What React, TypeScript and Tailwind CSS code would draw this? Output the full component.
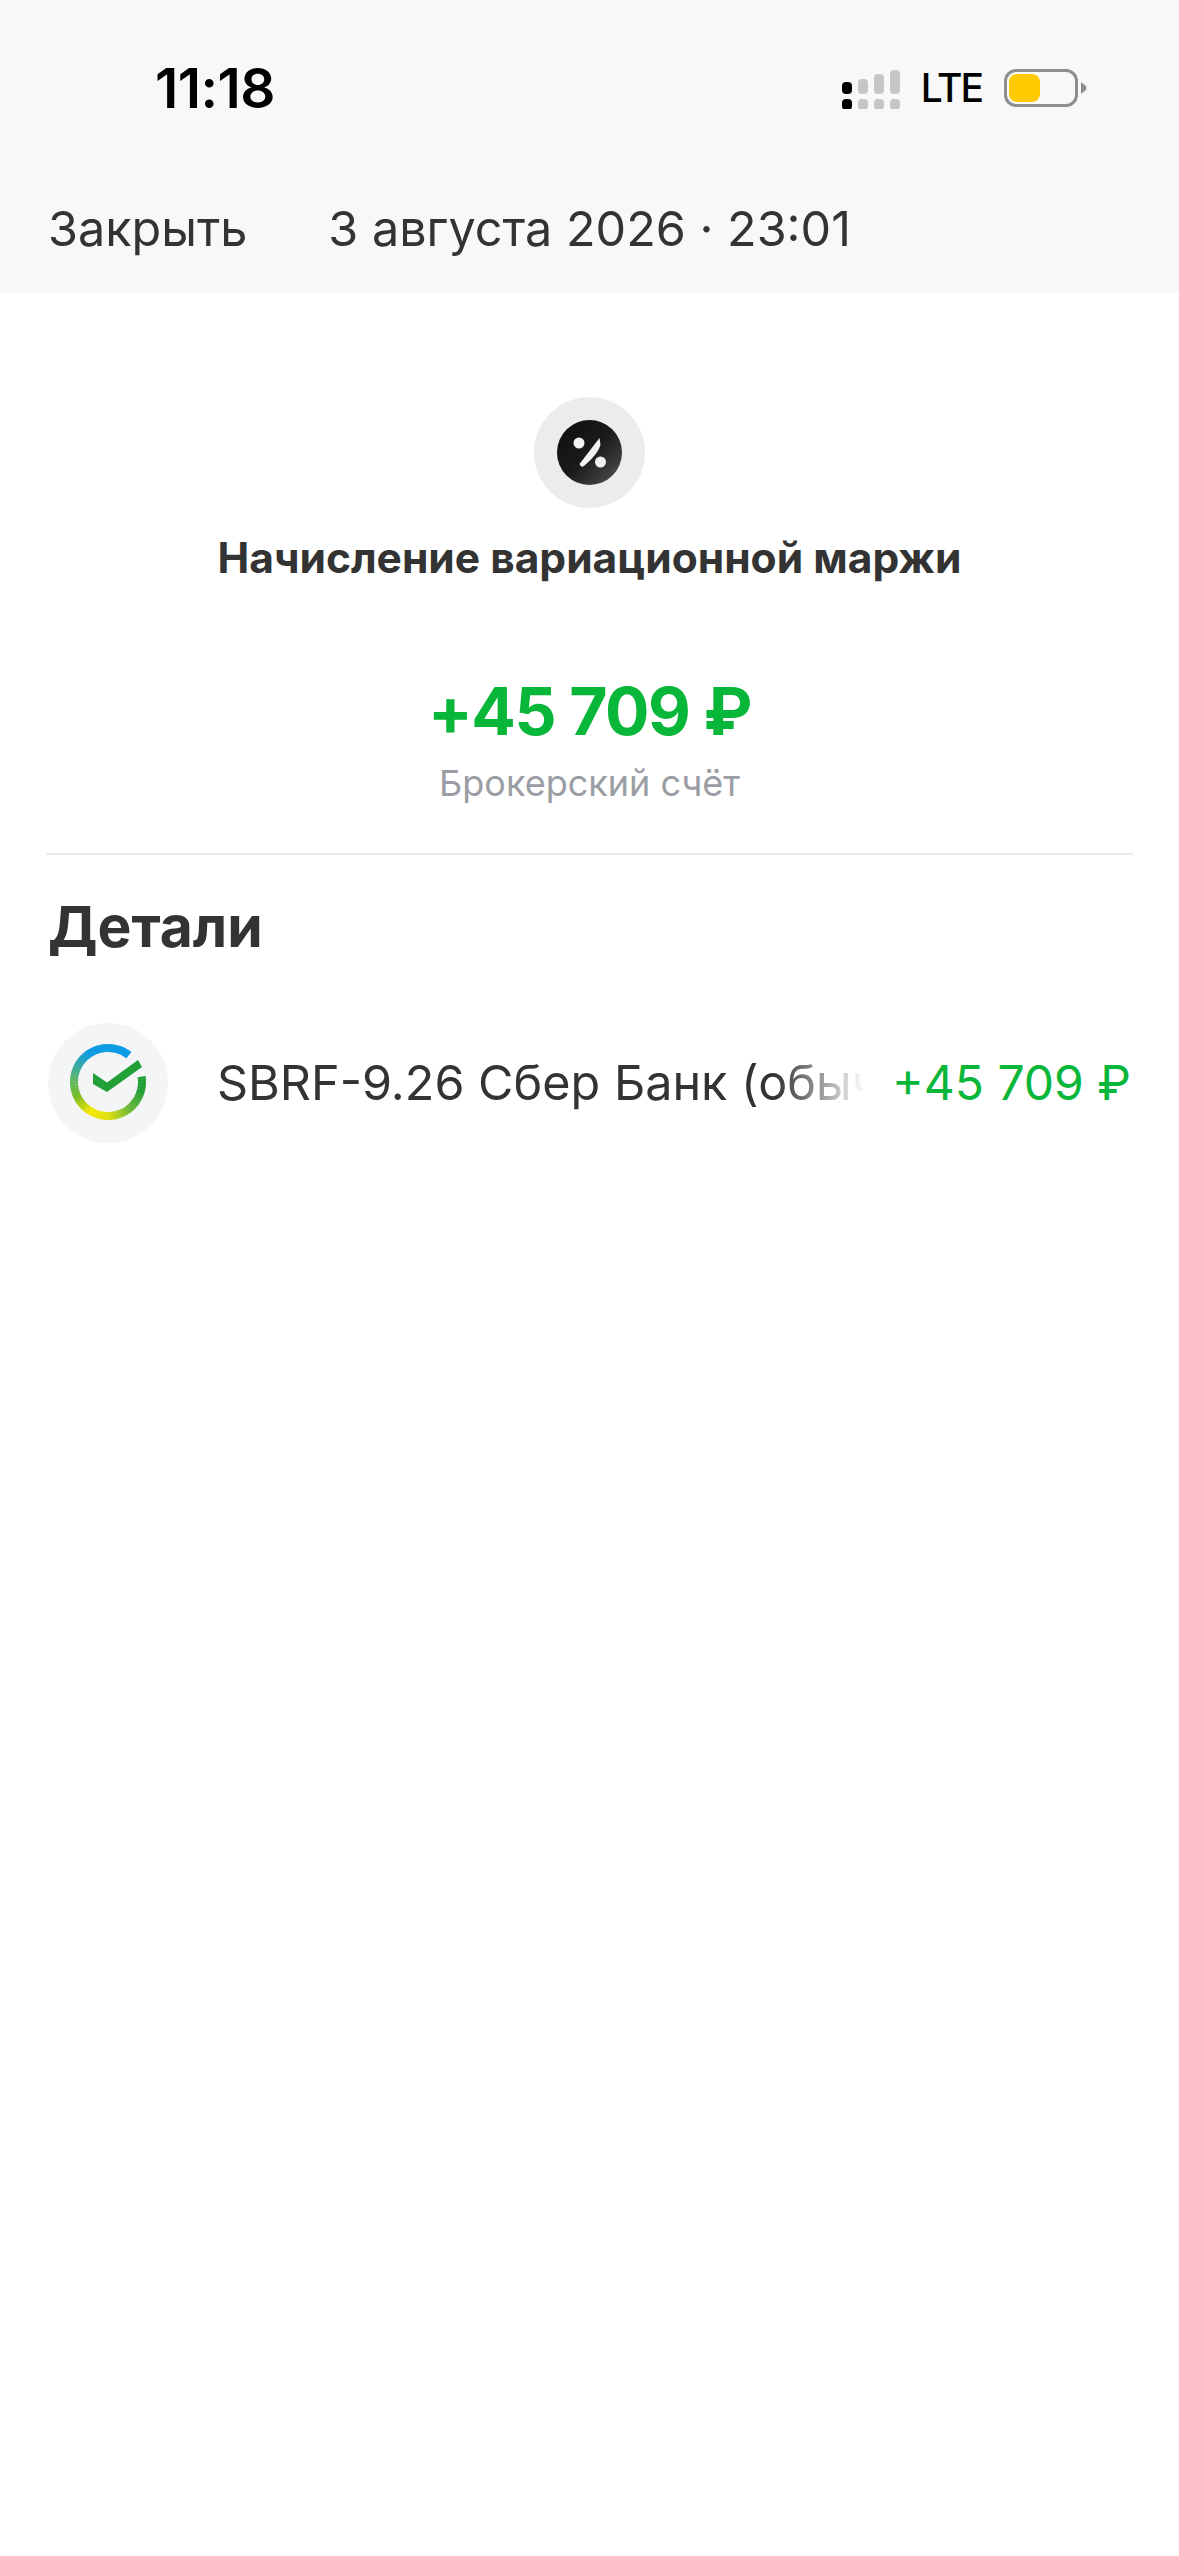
import React from 'react';

const font = { fontFamily: 'Inter, "Noto Sans", sans-serif' };

// signal bars: top piece height grows, lower dots stay the same
const SignalIcon = () => {
  const bars = [
    { x: 0, y: 27, h: 12, fill: '#000000' },
    { x: 16, y: 24, h: 15, fill: '#c6c6c6' },
    { x: 32, y: 19, h: 20, fill: '#c6c6c6' },
    { x: 48, y: 15, h: 24, fill: '#c6c6c6' },
  ];
  return (
    <svg width="58" height="42" viewBox="0 12 58 42">
      {bars.map((b) => (
        <g key={b.x} fill={b.fill}>
          <rect x={b.x} y={b.y} width="10" height={b.h} rx="4" />
          <rect x={b.x} y="44" width="10" height="11" rx="4" />
        </g>
      ))}
    </svg>
  );
};

const Battery = () => (
  <div className="flex items-center">
    <div className="w-[74px] h-[38px] rounded-[12px] border-[3px] border-[#8e8e8e] p-[2px]">
      <div className="w-[31px] h-full rounded-[8px] bg-[#fecb00]" />
    </div>
    <svg width="8" height="12" viewBox="0 0 8 12" className="ml-[3px]">
      <path d="M0 0 L5 4 Q6 6 5 8 L0 12 Z" fill="#8e8e8e" />
    </svg>
  </div>
);

const PercentIcon = () => (
  <svg width="65" height="65" viewBox="0 0 65 65">
    <defs>
      <linearGradient id="pct" x1="0" y1="0" x2="1" y2="1">
        <stop offset="0" stopColor="#0e0e0e" />
        <stop offset="0.5" stopColor="#1a1a1a" />
        <stop offset="1" stopColor="#555555" />
      </linearGradient>
    </defs>
    <circle cx="32.5" cy="32.5" r="32.5" fill="url(#pct)" />
    <circle cx="22" cy="23" r="5.5" fill="#f2f2f2" />
    <circle cx="43.5" cy="42" r="5.5" fill="#f2f2f2" />
    <path d="M42.5 18 L22.5 44 Q24 48 27 46 Q41 34 43.5 25 Z" fill="#f2f2f2" />
  </svg>
);

const ringStops: [number, number[]][] = [
  [0, [10, 155, 230]],
  [0.22, [15, 155, 225]],
  [0.36, [85, 180, 125]],
  [0.48, [125, 190, 35]],
  [0.58, [245, 232, 5]],
  [0.68, [225, 225, 15]],
  [0.8, [110, 185, 60]],
  [0.92, [33, 160, 56]],
  [1, [33, 160, 56]],
];

const ringColor = (t: number) => {
  for (let i = 1; i < ringStops.length; i++) {
    const [t0, c0] = ringStops[i - 1];
    const [t1, c1] = ringStops[i];
    if (t <= t1) {
      const k = (t - t0) / (t1 - t0);
      return `rgb(${c0.map((v, j) => Math.round(v + (c1[j] - v) * k)).join(',')})`;
    }
  }
  return 'rgb(33,160,56)';
};

const SberIcon = () => {
  const steps = 60;
  const cx = 78;
  const cy = 72;
  const r = 34;
  // ring runs counter-clockwise from top right round to the right side
  const start = -52;
  const end = -369;
  const pt = (a: number) => {
    const rad = (a * Math.PI) / 180;
    return `${(cx + r * Math.cos(rad)).toFixed(2)} ${(cy + r * Math.sin(rad)).toFixed(2)}`;
  };
  const arcs = Array.from({ length: steps }, (_, i) => {
    const a0 = start + ((end - start) * i) / steps;
    const a1 = start + ((end - start) * (i + 1.15)) / steps;
    return (
      <path
        key={i}
        d={`M${pt(a0)} A${r} ${r} 0 0 0 ${pt(Math.max(a1, end))}`}
        stroke={ringColor(i / steps)}
        strokeWidth="8"
        fill="none"
      />
    );
  });
  return (
    <svg width="120" height="120" viewBox="18 13 120 120">
      {arcs}
      <path d="M63 63 L77 72.5 L108 50 L112 57 L77 82 L63 74 Z" fill="#21a038" />
    </svg>
  );
};

export default function App() {
  return (
    <div className="w-[1179px] h-[2556px] bg-white overflow-hidden" style={font}>
      <div className="h-[293px] bg-[#f8f8f8] flex flex-col">
        <div className="h-[176px] flex items-center justify-between pl-[155px] pr-[90px]">
          <span className="text-[55px] font-semibold text-black tracking-[-0.5px]">11:18</span>
          <div className="flex items-center">
            <SignalIcon />
            <span className="ml-[21px] mr-[22px] text-[39px] font-medium text-black tracking-[-2px]">LTE</span>
            <Battery />
          </div>
        </div>
        <div className="mt-[23px] flex items-center pl-[48px] text-[#333333] text-[48.5px] leading-[60px]">
          <span>Закрыть</span>
          <span className="ml-[81px]">3 августа 2026 · 23:01</span>
        </div>
      </div>

      <div className="flex flex-col items-center pt-[104px]">
        <div className="w-[111px] h-[111px] rounded-full bg-[#ebeded] flex items-center justify-center">
          <PercentIcon />
        </div>
        <h1 className="mt-[25px] text-[42.5px] leading-[50px] font-bold text-[#333333]">Начисление вариационной маржи</h1>
        <div className="mt-[86px] text-[66px] leading-[84px] font-bold tracking-[-1.5px] text-[#08b639]">+45 709 ₽</div>
        <div className="mt-[8px] text-[36px] leading-[44px] text-[#9a9da3]">Брокерский счёт</div>
      </div>

      <div className="mx-[46px] mt-[48px] h-[2px] bg-[#ebebeb]" />

      <div className="px-[48px]">
        <h2 className="mt-[36px] text-[57px] leading-[72px] font-bold text-[#333333]">Детали</h2>
        <div className="mt-[60px] flex items-center">
          <div className="w-[120px] h-[120px] shrink-0 rounded-full bg-[#f3f5f6]">
            <SberIcon />
          </div>
          <div className="relative ml-[49px] w-[648px] overflow-hidden whitespace-nowrap text-[48.5px] text-[#333333]">
            SBRF-9.26 Сбер Банк (обычные)
            <div className="absolute top-0 right-0 h-full w-[90px] bg-gradient-to-r from-transparent to-white" />
          </div>
          <span className="ml-[27px] text-[48px] whitespace-nowrap text-[#08b639]">+45 709 ₽</span>
        </div>
      </div>
    </div>
  );
}
